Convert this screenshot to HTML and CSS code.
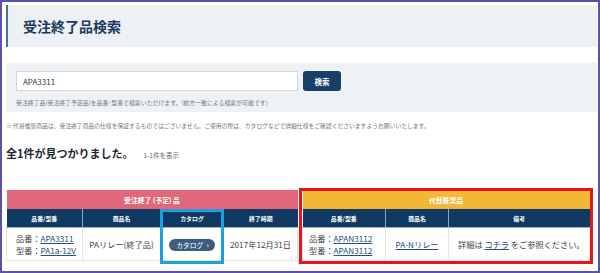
FILE: index.html
```html
<!DOCTYPE html>
<html lang="ja">
  <head>
    <meta charset="UTF-8" />
    <meta name="viewport" content="width=device-width, initial-scale=1.0" />
    <title>受注終了品検索</title>
    <link rel="stylesheet" href="styles.css">
  </head>
  <body>
    <div class="frame">
      <div class="page-head">
        <h1>受注終了品検索</h1>
      </div>

      <form class="search-box">
        <div class="search-row">
          <input type="text" name="keyword" value="APA3311" />
          <button type="submit">検索</button>
        </div>
        <p class="search-help">受注終了品(受注終了予定品)を品番･型番で検索いただけます。(前方一致による検索が可能です)</p>
      </form>

      <p class="notice">※ 代替推奨商品は、受注終了商品の仕様を保証するものではございません。ご使用の際は、カタログなどで詳細仕様をご確認くださいますようお願いいたします。</p>

      <div class="result-head">
        <h2>全1件が見つかりました。</h2>
        <span class="result-count">1-1件を表示</span>
      </div>

      <div class="result-tables">
        <div class="table-wrap old">
          <table>
            <colgroup>
              <col style="width:76px" />
              <col style="width:78px" />
              <col style="width:63px" />
              <col />
            </colgroup>
            <tr class="group-row"><th colspan="4">受注終了 (予定) 品</th></tr>
            <tr class="col-row">
              <th>品番/型番</th>
              <th>商品名</th>
              <th>カタログ</th>
              <th>終了時期</th>
            </tr>
            <tr class="body-row">
              <td class="code-cell">品番：<a href="#">APA3311</a><br />型番：<a href="#">PA1a-12V</a></td>
              <td class="center">PAリレー(終了品)</td>
              <td class="center"><a class="catalog-btn" href="#">カタログ<span class="arrow">›</span></a></td>
              <td class="center">2017年12月31日</td>
            </tr>
          </table>
          <div class="mark-blue"></div>
        </div>

        <div class="table-wrap new">
          <table>
            <colgroup>
              <col style="width:83px" />
              <col style="width:63px" />
              <col />
            </colgroup>
            <tr class="group-row"><th colspan="3">代替推奨品</th></tr>
            <tr class="col-row">
              <th>品番/型番</th>
              <th>商品名</th>
              <th>備考</th>
            </tr>
            <tr class="body-row">
              <td class="code-cell">品番：<a href="#">APAN3112</a><br />型番：<a href="#">APAN3112</a></td>
              <td class="center"><a href="#">PA-Nリレー</a></td>
              <td class="note-cell">詳細は <a href="#">コチラ</a> をご参照ください。</td>
            </tr>
          </table>
        </div>
      </div>
    </div>
  </body>
</html>
```

FILE: styles.css
```css
body {
  margin: 0;
  font-family: "Noto Sans CJK JP", "Noto Sans", sans-serif;
  color: #333;
  background: #fff;
}
.frame {
  width: 600px;
  height: 273px;
  box-sizing: border-box;
  border: 2px solid #5a50ae;
  padding: 3px 1px 0 4px;
  overflow: hidden;
}
.page-head {
  height: 42px;
  background-color: #edf1f5;
  border-left: 2px solid #4a6f98;
  display: flex;
  align-items: center;
  padding-left: 15px;
}
.page-head h1 {
  margin: 0;
  font-size: 14px;
  font-weight: bold;
  color: #1c3a5e;
}
.search-box {
  margin-top: 16px;
  background-color: #eff2f5;
  padding: 8px 10px 4px;
}
.search-row {
  display: flex;
  gap: 5px;
}
.search-row input {
  width: 282px;
  height: 20px;
  box-sizing: border-box;
  border: 1px solid #cfd6de;
  background: #fff;
  padding: 0 6px;
  font-family: inherit;
  font-size: 8px;
  color: #333;
  outline: none;
}
.search-row button {
  width: 38px;
  height: 20px;
  border: none;
  border-radius: 3px;
  background-color: #173f67;
  color: #fff;
  font-family: inherit;
  font-size: 7.5px;
  font-weight: bold;
  padding: 0;
}
.search-help {
  margin: 7px 0 0;
  font-size: 5.9px;
  line-height: 10px;
  color: #777;
}
.notice {
  margin: 9px 0 0;
  font-size: 5.8px;
  line-height: 10px;
  color: #777;
}
.result-head {
  margin-top: 14px;
  display: flex;
  align-items: baseline;
  height: 16px;
}
.result-head h2 {
  margin: 0;
  font-size: 11px;
  line-height: 16px;
  font-weight: bold;
  color: #1d2633;
}
.result-count {
  margin-left: 10px;
  font-size: 6.5px;
  color: #666;
}
.result-tables {
  margin-top: 29px;
  display: flex;
  gap: 4px;
}
.table-wrap {
  position: relative;
}
.table-wrap.old {
  width: 292px;
}
.table-wrap.new {
  width: 288px;
  margin-top: 1px;
  outline: 3px solid #e8131b;
}
.table-wrap table {
  width: 100%;
  border-collapse: collapse;
  table-layout: fixed;
}
.group-row th {
  height: 19px;
  padding: 0;
  color: #fff;
  font-size: 6.8px;
  font-weight: bold;
}
.old .group-row th {
  background-color: #e0687a;
}
.new .group-row th {
  height: 18px;
  background-color: #f2b833;
}
.col-row th {
  height: 18px;
  padding: 0;
  background-color: #0e3a63;
  color: #fff;
  font-size: 5.9px;
  font-weight: bold;
  border-left: 1px solid #8ea4ba;
  border-bottom: 1px solid #9fb3c6;
}
.col-row th:first-child {
  border-left: none;
}
.body-row td {
  height: 32px;
  padding: 0;
  font-size: 8.2px;
  line-height: 12px;
  color: #444;
  border: 1px solid #e2e5e8;
}
.body-row a {
  color: #264f7c;
}
.code-cell {
  padding-left: 9px !important;
}
.new .code-cell {
  padding-left: 6px !important;
}
.note-cell {
  padding-left: 9px !important;
}
.center {
  text-align: center;
}
.catalog-btn {
  display: inline-block;
  height: 12px;
  line-height: 12px;
  padding: 0 6px 0 7px;
  border-radius: 6px;
  background-color: #3b5e80;
  color: #fff !important;
  font-size: 6.8px;
  text-decoration: none;
}
.catalog-btn .arrow {
  margin-left: 3px;
  font-size: 8px;
}
.mark-blue {
  position: absolute;
  left: 154px;
  top: 19px;
  width: 64px;
  height: 55px;
  box-sizing: border-box;
  border: 3px solid #1ba1e2;
}
```
